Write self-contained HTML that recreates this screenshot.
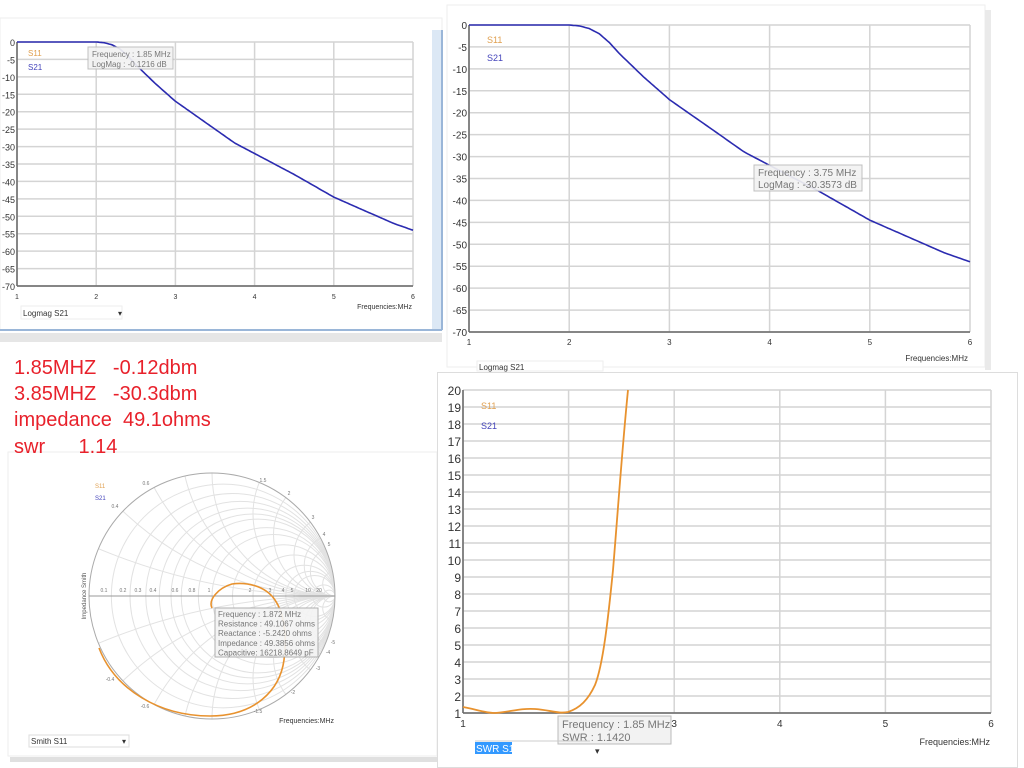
<!DOCTYPE html>
<html><head><meta charset="utf-8"><style>
html,body{margin:0;background:#fff;width:1024px;height:768px;overflow:hidden;font-family:"Liberation Sans",sans-serif}
svg{position:absolute;left:0;top:0}
.red{position:absolute;left:14px;color:#e8212b;font-size:20px;line-height:24px;font-family:"Liberation Sans",sans-serif;white-space:pre}
</style></head><body>
<svg id="s" width="1024" height="768" xmlns="http://www.w3.org/2000/svg" font-family="Liberation Sans, sans-serif">
<rect x="0" y="18" width="442" height="312" fill="#fff" stroke="#eee"/>
<rect x="432" y="30" width="11" height="300" fill="#dce8f5"/>
<line x1="442" y1="30" x2="442" y2="330" stroke="#9ab6d8" stroke-width="2"/>
<line x1="0" y1="330" x2="442" y2="330" stroke="#9ab6d8" stroke-width="2"/>
<rect x="0" y="333" width="442" height="9" fill="#e6e6e6"/>
<rect x="447" y="5" width="538" height="362" fill="#fff" stroke="#eee"/>
<rect x="985" y="10" width="6" height="360" fill="#eaeaea"/>
<rect x="8" y="452" width="429" height="304" fill="#fff" stroke="#eee"/>
<rect x="10" y="757" width="427" height="5" fill="#e0e0e0"/>
<rect x="437.5" y="372.5" width="580" height="395" fill="#fff" stroke="#ddd"/>
<g id="g"></g>
</svg>
<div class="red" style="top:356px">1.85MHZ   -0.12dbm</div>
<div class="red" style="top:382px">3.85MHZ   -30.3dbm</div>
<div class="red" style="top:408px">impedance  49.1ohms</div>
<div class="red" style="top:435px">swr      1.14</div>
<script>
var o='';
function L(x1,y1,x2,y2,c,w){o+='<line x1="'+x1+'" y1="'+y1+'" x2="'+x2+'" y2="'+y2+'" stroke="'+c+'" stroke-width="'+(w||1)+'"/>';}
function T(x,y,t,s,c,a,ex){o+='<text x="'+x+'" y="'+y+'" font-size="'+s+'" fill="'+(c||'#333')+'" text-anchor="'+(a||'start')+'" '+(ex||'')+'>'+t+'</text>';}
function db(f){var pts=[[1,0],[2,0],[2.1,-0.2],[2.2,-0.8],[2.3,-2],[2.4,-4],[2.5,-6.5],[2.75,-12],[3,-17],[3.25,-21],[3.5,-25],[3.75,-29],[4,-32],[4.5,-38],[5,-44.5],[5.5,-49.5],[5.75,-52],[6,-54]];
 for(var i=1;i<pts.length;i++){if(f<=pts[i][0]){var a=pts[i-1],b=pts[i],t=(f-a[0])/(b[0]-a[0]);return a[1]+t*(b[1]-a[1]);}}return -54;}
function logplot(x0,x1,y0,y1,fs){
 var sy=(y1-y0)/14,sx=(x1-x0)/5;
 for(var i=0;i<=14;i++){var y=y0+i*sy;L(x0,y,x1,y,'#d4d4d4',1.5);T(x0-2,y+4,i==0?'0':'-'+i*5,fs,'#333','end');}
 for(var j=0;j<=5;j++){var x=x0+j*sx;L(x,y0,x,y1,'#d4d4d4',1.5);T(x,y1+13,j+1,fs-2,'#333','middle');}
 L(x0,y0,x0,y1,'#666',1.5);L(x0,y1,x1,y1,'#666',1.5);
 var d='';for(var f=1;f<=6.001;f+=0.02){var x=x0+(f-1)*sx,y=y0-db(f)/70*(y1-y0);d+=(d?'L':'M')+x.toFixed(1)+' '+y.toFixed(1);}
 o+='<path d="'+d+'" fill="none" stroke="#2b2bb0" stroke-width="1.6"/>';
}
logplot(17,413,42,286,9);
T(28,56,'S11',8,'#e0a050');T(28,70,'S21',8,'#4444bb');
o+='<rect x="88" y="47" width="85" height="22" fill="#f2f2f2" stroke="#bbb" opacity="0.92"/>';
T(92,57,'Frequency : 1.85 MHz',8,'#777');T(92,67,'LogMag : -0.1216 dB',8,'#777');
o+='<rect x="21" y="306" width="101" height="13" fill="#fff" stroke="#eee"/>';T(23,316,'Logmag S21',8,'#333');T(118,316,'▾',8,'#333');
T(412,309,'Frequencies:MHz',7,'#333','end');
logplot(469,970,25,332,10);
T(487,43,'S11',9,'#e0a050');T(487,61,'S21',9,'#4444bb');
o+='<rect x="754" y="165" width="108" height="26" fill="#f2f2f2" stroke="#bbb" opacity="0.92"/>';
T(758,176,'Frequency : 3.75 MHz',10,'#777');T(758,188,'LogMag : -30.3573 dB',10,'#777');
o+='<rect x="477" y="361" width="126" height="10" fill="#fff" stroke="#eee"/>';T(479,370,'Logmag S21',8,'#333');
T(968,361,'Frequencies:MHz',8,'#333','end');
var X0=463,X1=991,Y0=390,Y1=713,sy=(Y1-Y0)/19;
for(var i=0;i<=19;i++){var y=Y0+i*sy;L(X0,y,X1,y,'#d4d4d4',1.5);T(X0-2,y+5,20-i,12,'#333','end');}
for(var j=0;j<=5;j++){var x=X0+j*(X1-X0)/5;L(x,Y0,x,Y1,'#d4d4d4',1.5);T(x,Y1+14,j+1,10,'#333','middle');}
L(X0,Y0,X0,Y1,'#666',1.5);L(X0,Y1,X1,Y1,'#666',1.5);
o+='<path d="M463 707 C475 709,485 713,495 713 C510 712,520 708,535 709 C550 710,558 714,568 712 C580 708,588 700,595 685 C603 665,608 620,613 570 C618 510,622 450,628 390" fill="none" stroke="#e8922e" stroke-width="1.8"/>';
T(481,409,'S11',9,'#e0a050');T(481,429,'S21',9,'#4444bb');
o+='<rect x="558" y="716" width="113" height="28" fill="#f2f2f2" stroke="#bbb"/>';
T(562,728,'Frequency : 1.85 MHz',11,'#777');T(562,741,'SWR : 1.1420',11,'#777');
o+='<rect x="475" y="742" width="37" height="12" fill="#3399ff"/>';T(476,752,'SWR S11',10,'#fff');T(595,754,'▾',9,'#333');
L(475,741,590,741,'#ccc');
T(990,745,'Frequencies:MHz',9,'#333','end');
var cx=212,cy=596,R=123;
o+='<defs><clipPath id="cc"><circle cx="'+cx+'" cy="'+cy+'" r="'+R+'"/></clipPath></defs><g clip-path="url(#cc)">';
[0.1,0.2,0.3,0.4,0.5,0.6,0.8,1,1.4,2,3,4,5,10,20].forEach(function(r){var rr=R/(1+r);o+='<circle cx="'+(cx+R-rr)+'" cy="'+cy+'" r="'+rr+'" fill="none" stroke="#e2e2e2"/>';});
[0.2,0.4,0.6,0.8,1,1.5,2,3,4,5,10].forEach(function(x){var rr=R/x;o+='<circle cx="'+(cx+R)+'" cy="'+(cy-rr)+'" r="'+rr+'" fill="none" stroke="#e2e2e2"/><circle cx="'+(cx+R)+'" cy="'+(cy+rr)+'" r="'+rr+'" fill="none" stroke="#e2e2e2"/>';});
o+='</g><circle cx="'+cx+'" cy="'+cy+'" r="'+R+'" fill="none" stroke="#aaa"/>';
L(cx-R,cy,cx+R,cy,'#999');
[['0.1',104],['0.2',123],['0.3',138],['0.4',153],['0.6',175],['0.8',192],['1',209],['2',250],['3',270],['4',283],['5',292],['10',308],['20',319]].forEach(function(a){T(a[1],cy-4,a[0],5,'#777','middle');});
[['0.6',146,485],['0.4',115,508],['1.5',263,482],['2',289,495],['3',313,519],['4',324,536],['5',329,546],['-0.4',110,681],['-0.6',145,708],['-1.5',258,713],['-2',293,694],['-3',318,670],['-4',328,654],['-5',333,644]].forEach(function(a){T(a[1],a[2],a[0],5,'#777','middle');});
o+='<path d="M99 648 C115 690,160 716,210 716 C255 716,280 690,284 660 C288 630,282 610,275 600 C265 585,245 582,232 584 C218 588,208 600,212 608" fill="none" stroke="#e8922e" stroke-width="1.6"/>';
T(95,488,'S11',6,'#e0a050');T(95,500,'S21',6,'#4444bb');
T(86,596,'Impedance Smith',6,'#555','middle','transform="rotate(-90 86 596)"');
o+='<rect x="215" y="608" width="103" height="49" fill="#f4f4f4" stroke="#aaa" opacity="0.93"/>';
['Frequency : 1.872 MHz','Resistance : 49.1067 ohms','Reactance : -5.2420 ohms','Impedance : 49.3856 ohms','Capacitive: 16218.8649 pF'].forEach(function(t,i){T(218,617+i*9.6,t,8,'#777');});
T(334,723,'Frequencies:MHz',7,'#333','end');
o+='<rect x="29" y="735" width="100" height="12" fill="#fff" stroke="#ddd"/>';T(31,744,'Smith S11',8,'#333');T(122,744,'▾',8,'#333');
document.getElementById('g').innerHTML=o;
</script>
</body></html>
